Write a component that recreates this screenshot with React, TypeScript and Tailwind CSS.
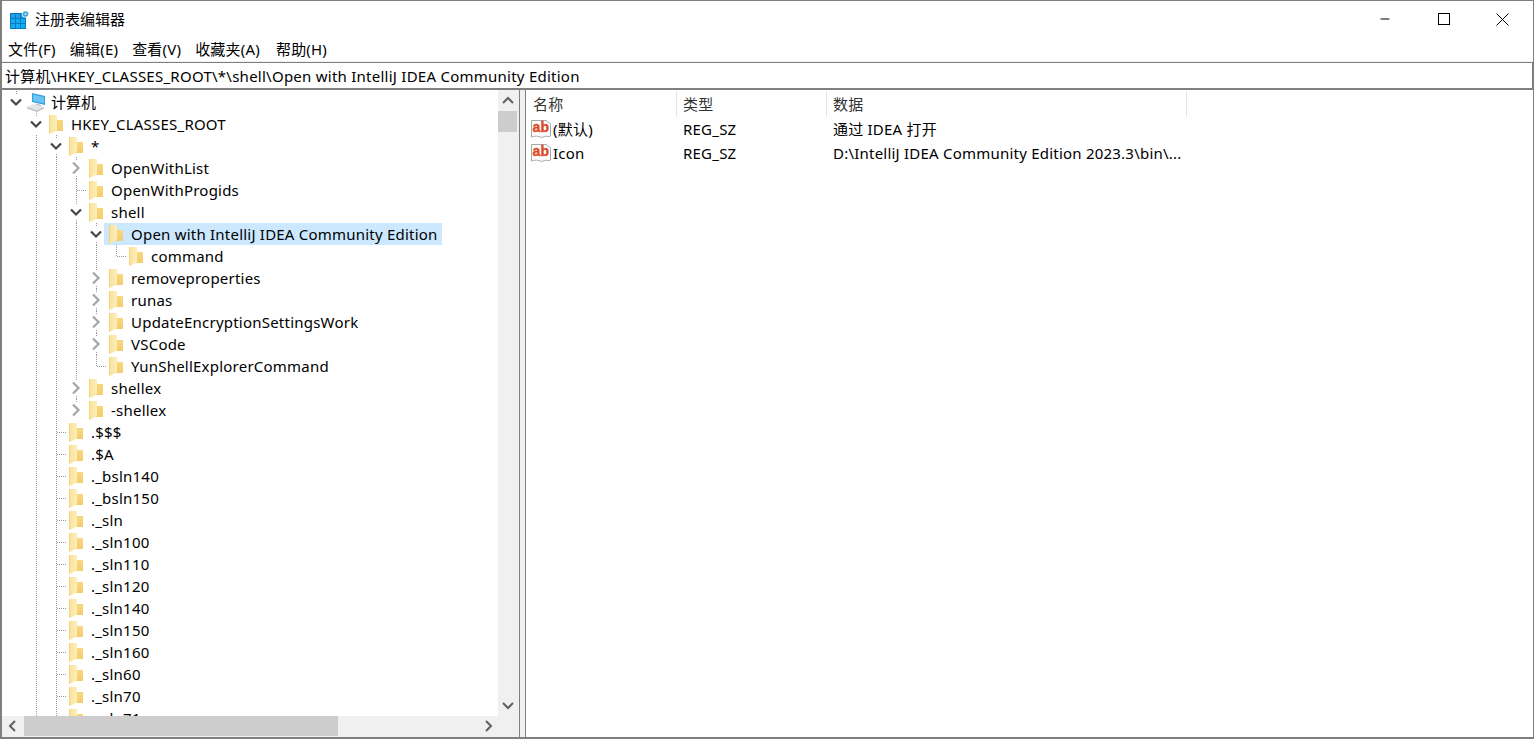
import { Minus } from 'lucide-react'

type Kind = 'open' | 'closed' | 'tee' | 'ell'

interface TreeRow {
  depth: number
  kind: Kind
  name: string
  more?: boolean
  selected?: boolean
}

const ROWS: TreeRow[] = [
  { depth: 1, kind: 'open', name: 'HKEY_CLASSES_ROOT' },
  { depth: 2, kind: 'open', name: '*', more: true },
  { depth: 3, kind: 'closed', name: 'OpenWithList', more: true },
  { depth: 3, kind: 'tee', name: 'OpenWithProgids' },
  { depth: 3, kind: 'open', name: 'shell', more: true },
  { depth: 4, kind: 'open', name: 'Open with IntelliJ IDEA Community Edition', more: true, selected: true },
  { depth: 5, kind: 'ell', name: 'command' },
  { depth: 4, kind: 'closed', name: 'removeproperties', more: true },
  { depth: 4, kind: 'closed', name: 'runas', more: true },
  { depth: 4, kind: 'closed', name: 'UpdateEncryptionSettingsWork', more: true },
  { depth: 4, kind: 'closed', name: 'VSCode', more: true },
  { depth: 4, kind: 'ell', name: 'YunShellExplorerCommand' },
  { depth: 3, kind: 'closed', name: 'shellex', more: true },
  { depth: 3, kind: 'closed', name: '-shellex' },
  { depth: 2, kind: 'tee', name: '.$$$' },
  { depth: 2, kind: 'tee', name: '.$A' },
  { depth: 2, kind: 'tee', name: '._bsln140' },
  { depth: 2, kind: 'tee', name: '._bsln150' },
  { depth: 2, kind: 'tee', name: '._sln' },
  { depth: 2, kind: 'tee', name: '._sln100' },
  { depth: 2, kind: 'tee', name: '._sln110' },
  { depth: 2, kind: 'tee', name: '._sln120' },
  { depth: 2, kind: 'tee', name: '._sln140' },
  { depth: 2, kind: 'tee', name: '._sln150' },
  { depth: 2, kind: 'tee', name: '._sln160' },
  { depth: 2, kind: 'tee', name: '._sln60' },
  { depth: 2, kind: 'tee', name: '._sln70' },
  { depth: 2, kind: 'tee', name: '._sln71' },
]

const DOT = { stroke: '#9a9a9a', strokeWidth: 1, strokeDasharray: '1 1', shapeRendering: 'crispEdges' as const }

function Guide() {
  return (
    <svg width="20" height="22" className="shrink-0">
      <line x1="10.5" y1="0" x2="10.5" y2="22" {...DOT} />
    </svg>
  )
}

function Connector({ kind, more }: { kind: Kind; more?: boolean }) {
  if (kind === 'tee' || kind === 'ell') {
    return (
      <svg width="20" height="22" className="shrink-0">
        <line x1="10.5" y1="0" x2="10.5" y2={kind === 'tee' ? 22 : 11} {...DOT} />
        <line x1="11" y1="11.5" x2="20" y2="11.5" {...DOT} />
      </svg>
    )
  }
  const open = kind === 'open'
  return (
    <svg width="20" height="22" className="shrink-0">
      <line x1="10.5" y1="0" x2="10.5" y2="3" {...DOT} />
      {more && <line x1="10.5" y1="19" x2="10.5" y2="22" {...DOT} />}
      {open ? (
        <polyline points="5,8.500 10,13.500 15,8.500" fill="none" stroke="#454545" strokeWidth="2.200" />
      ) : (
        <polyline points="7,5.500 12.500,11 7,16.500" fill="none" stroke="#a6a6a6" strokeWidth="2.200" />
      )}
    </svg>
  )
}

function Folder() {
  return (
    <svg width="14" height="19" viewBox="0 0 14 19" className="shrink-0">
      <defs>
        <linearGradient id="foldBack" x1="0" y1="0" x2="0" y2="1">
          <stop offset="0" stopColor="#fbdc84" />
          <stop offset="1" stopColor="#f4cd6e" />
        </linearGradient>
        <linearGradient id="foldFront" x1="0" y1="0" x2="1" y2="0">
          <stop offset="0" stopColor="#f9e29a" />
          <stop offset="1" stopColor="#fdeeb8" />
        </linearGradient>
      </defs>
      <path d="M6 0h2v5h6v11H6z" fill="url(#foldBack)" />
      <path d="M0 0h8v15l-6 3.500H0z" fill="url(#foldFront)" />
      <path d="M0 0h1v18.500H0z" fill="#f2d27c" />
    </svg>
  )
}

function ComputerIcon() {
  return (
    <svg width="20" height="21" viewBox="0 0 20 21" className="shrink-0">
      <path d="M6 1 19 4v9L6 10z" fill="#2f9fe0" />
      <path d="M7 2.500 18 5v6.500L7 9z" fill="#6cc4f2" />
      <path d="M10 11.500 15 13v2l-5-1.500z" fill="#b8bec4" />
      <path d="M1 15 8 12l10 3-7 3.500z" fill="#e3e6e8" />
      <path d="M1 15v1.500l10 3.500 7-3.500V15l-7 3.500z" fill="#b9bdc1" />
    </svg>
  )
}

function RegeditIcon() {
  return (
    <svg width="20" height="20" viewBox="0 0 20 20" className="shrink-0">
      <rect x="0" y="3" width="16" height="16" fill="#0a78c2" />
      {[0, 1, 2].map(r =>
        [0, 1, 2].map(c => (
          <rect key={`${r}-${c}`} x={1 + c * 5} y={4 + r * 5} width="4" height="4" fill={r === 0 ? '#1e9fe6' : '#12aef0'} />
        )),
      )}
      <circle cx="15.500" cy="4" r="3.500" fill="#ffffff" />
      <circle cx="15.500" cy="4" r="2.800" fill="#3fa7d8" />
      <circle cx="15.500" cy="4" r="1" fill="#d4eefa" />
    </svg>
  )
}

function StringIcon() {
  return (
    <svg width="20" height="20" viewBox="0 0 20 20" className="shrink-0">
      <path d="M.5 1.500H15L19.500 5v12c-2 1.500-3.500-.5-6 .5s-3.500 1-6 0-4.500 0-7 .5z" fill="#ffffff" stroke="#a8a8a8" />
      <text x="1.500" y="12.500" fill="#dc4a28" stroke="#dc4a28" strokeWidth="0.400" fontSize="14" fontWeight="700" fontFamily="'Liberation Sans', sans-serif">ab</text>
    </svg>
  )
}

function Arrow({ dir }: { dir: 'up' | 'down' | 'left' | 'right' }) {
  const points = {
    up: '5,12 10,7 15,12',
    down: '5,8 10,13 15,8',
    left: '12,5 7,10 12,15',
    right: '8,5 13,10 8,15',
  }[dir]
  return (
    <svg width="20" height="20" className="shrink-0">
      <polyline points={points} fill="none" stroke="#606060" strokeWidth="2" />
    </svg>
  )
}

function Row({ row }: { row: TreeRow }) {
  return (
    <div className="flex h-[22px] shrink-0 items-center whitespace-nowrap">
      <div className="w-5 shrink-0" />
      {Array.from({ length: row.depth - 1 }).map((_, i) => (
        <Guide key={i} />
      ))}
      <Connector kind={row.kind} more={row.more} />
      <div className={`-ml-[2px] flex h-[22px] items-center pl-[5px] pr-1 ${row.selected ? 'bg-[#cce8ff]' : ''}`}>
        <Folder />
        <span className="ml-2">{row.name}</span>
      </div>
    </div>
  )
}

export default function App() {
  return (
    <div className="flex h-[739px] w-[1534px] flex-col overflow-hidden border-b-2 border-l-2 border-r border-t border-[#7f7f7f] bg-white font-['Noto_Sans','Noto_Sans_CJK_SC',sans-serif] text-[15px] leading-[22px] tracking-[0.22px] text-black">
      {/* Title bar */}
      <div className="flex h-[36px] shrink-0 items-center">
        <div className="ml-2 mt-[1px]">
          <RegeditIcon />
        </div>
        <span className="ml-[5px] tracking-normal">注册表编辑器</span>
        <div className="ml-auto mr-[2px] flex h-full">
          <div className="flex w-[58px] items-center justify-center">
            <Minus size={14} strokeWidth={1} absoluteStrokeWidth className="text-black" />
          </div>
          <div className="flex w-[59px] items-center justify-center">
            <div className="h-[12px] w-[12px] border border-black" />
          </div>
          <div className="flex w-[58px] items-center justify-center">
            <svg width="13" height="13" viewBox="0 0 13 13">
              <path d="M.5.500l12 12M12.500.500l-12 12" stroke="#000" strokeWidth="1" fill="none" />
            </svg>
          </div>
        </div>
      </div>

      {/* Menu */}
      <div className="flex h-[25px] shrink-0 items-center gap-[14px] border-b border-[#f0f0f0] pb-px pl-[6px] tracking-[0.2px]">
        <span>文件(F)</span>
        <span>编辑(E)</span>
        <span>查看(V)</span>
        <span>收藏夹(A)</span>
        <span className="ml-[2px]">帮助(H)</span>
      </div>

      {/* Address bar */}
      <div className="flex h-[28px] shrink-0 items-center border-b-2 border-r border-t border-[#7f7f7f] pl-[3px] tracking-[0.25px]">
        计算机\HKEY_CLASSES_ROOT\*\shell\Open with IntelliJ IDEA Community Edition
      </div>

      <div className="flex min-h-0 flex-1">
        {/* Tree pane */}
        <div className="flex w-[518px] shrink-0 flex-col border-r border-[#7f7f7f] bg-[#f0f0f0] pr-[2px]">
          <div className="flex min-h-0 flex-1">
            <div className="min-w-0 flex-1 overflow-hidden bg-white pl-[4px] pt-px">
              <div className="flex h-[22px] items-center">
                <Connector kind="open" />
                <ComputerIcon />
                <span className="ml-[5px] tracking-normal">计算机</span>
              </div>
              {ROWS.map(row => (
                <Row key={row.name} row={row} />
              ))}
            </div>
            <div className="flex w-[19px] shrink-0 flex-col items-center">
              <div className="flex h-[21px] items-center">
                <Arrow dir="up" />
              </div>
              <div className="h-[21px] w-full bg-[#cdcdcd]" />
              <div className="mb-px mt-auto flex h-[21px] items-center">
                <Arrow dir="down" />
              </div>
            </div>
          </div>
          <div className="mb-px flex h-[20px] shrink-0 items-center">
            <div className="flex w-[22px] justify-center">
              <Arrow dir="left" />
            </div>
            <div className="h-full w-[314px] bg-[#cdcdcd]" />
            <div className="ml-auto mr-[19px] flex w-[21px] justify-center">
              <Arrow dir="right" />
            </div>
          </div>
        </div>

        <div className="w-[5px] shrink-0 bg-[#f0f0f0]" />

        {/* Value list */}
        <div className="min-w-0 flex-1 border-l border-[#7f7f7f] pt-px">
          <div className="grid h-[26px] grid-cols-[151px_150px_360px] items-stretch">
            <div className="flex items-center border-r border-[#e5e5e5] pl-[7px] text-[#333]">名称</div>
            <div className="flex items-center border-r border-[#e5e5e5] pl-[6px] text-[#333]">类型</div>
            <div className="flex items-center border-r border-[#e5e5e5] pl-[6px] text-[#333]">数据</div>
          </div>
          <div className="grid h-6 grid-cols-[150px_150px_360px] items-center">
            <div className="flex items-center pl-[5px]">
              <StringIcon />
              <span className="ml-[2px]">(默认)</span>
            </div>
            <div className="pl-[7px]">REG_SZ</div>
            <div className="pl-[7px]">通过 IDEA 打开</div>
          </div>
          <div className="grid h-6 grid-cols-[150px_150px_360px] items-center">
            <div className="flex items-center pl-[5px]">
              <StringIcon />
              <span className="ml-[2px]">Icon</span>
            </div>
            <div className="pl-[7px]">REG_SZ</div>
            <div className="truncate pl-[7px]">D:\IntelliJ IDEA Community Edition 2023.3\bin\...</div>
          </div>
        </div>
      </div>
    </div>
  )
}
